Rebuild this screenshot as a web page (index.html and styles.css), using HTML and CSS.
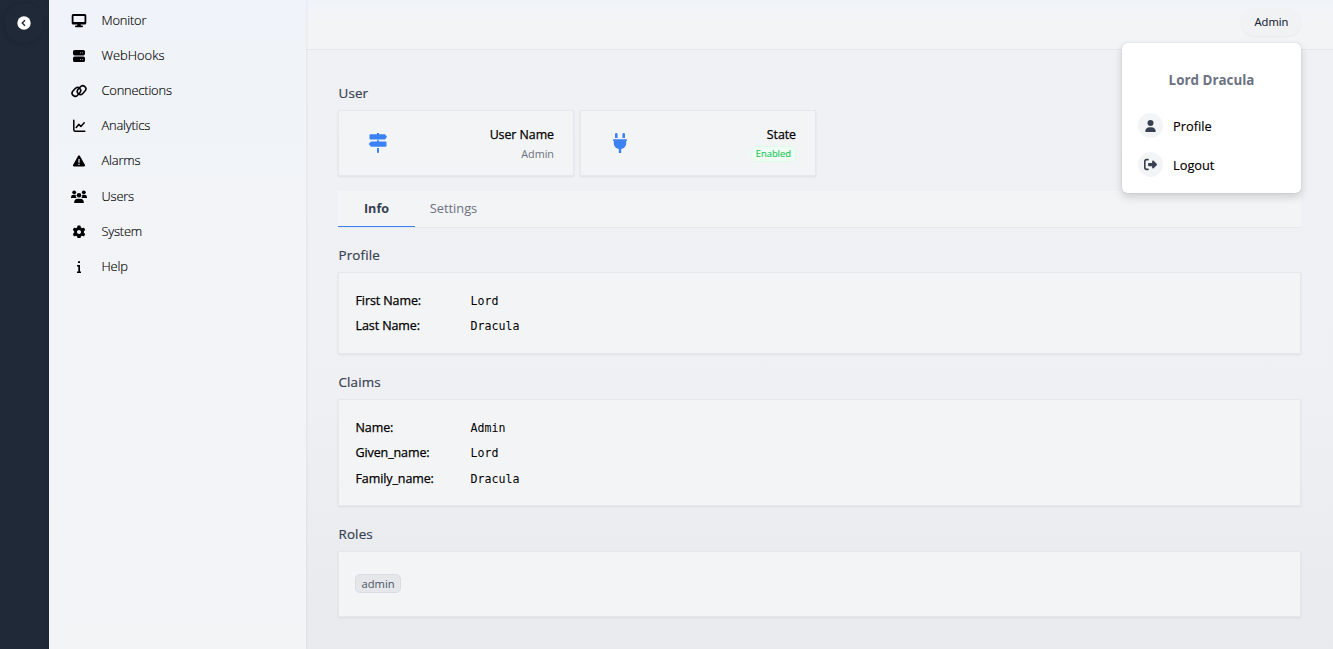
FILE: index.html
```html
<!DOCTYPE html>
<html lang="en">
<head>
<meta charset="utf-8">
<title>User</title>
<link rel="stylesheet" href="styles.css">
</head>
<body>
<div class="app">
  <aside class="rail">
    <button class="collapse" aria-label="Collapse menu">
      <svg width="14" height="14" viewBox="0 0 14 14"><circle cx="7" cy="7" r="6.700" fill="#fff"/><path d="M8 4.200 5.200 7 8 9.800" fill="none" stroke="#1f2937" stroke-width="1.400"/></svg>
    </button>
  </aside>
  <nav class="menu">
    <a class="item"><svg class="icon" viewBox="0 0 16 16"><path fill-rule="evenodd" d="M2.200 1.100h11.600a1.500 1.500 0 0 1 1.500 1.500v7.300a1.500 1.500 0 0 1-1.500 1.500H9.600l.3 1.200h1.300q.8 0 .8.8t-.8.8H4.800q-.8 0-.8-.8t.8-.8h1.300l.3-1.200H2.200a1.500 1.500 0 0 1-1.500-1.500V2.600a1.500 1.500 0 0 1 1.500-1.500zM2.500 2.900v6.200h11V2.900z"/></svg><span>Monitor</span></a>
    <a class="item wide"><svg class="icon" viewBox="0 0 16 16"><path fill-rule="evenodd" d="M3.600 2h8.800A1.600 1.600 0 0 1 14 3.600v2.200a1.600 1.600 0 0 1-1.600 1.600H3.600A1.600 1.600 0 0 1 2 5.800V3.600A1.600 1.600 0 0 1 3.600 2zM9 4.400v.8h.8v-.8zm2.300 0v.8h.8v-.8zM3.600 8.600h8.800a1.600 1.600 0 0 1 1.600 1.600v2.200a1.600 1.600 0 0 1-1.600 1.600H3.600A1.600 1.600 0 0 1 2 12.400v-2.200a1.600 1.600 0 0 1 1.600-1.600zM9 11v.8h.8V11zm2.300 0v.8h.8V11z"/></svg><span>WebHooks</span></a>
    <a class="item"><svg class="icon" viewBox="0 0 16 16"><g fill="none" stroke="#000" stroke-width="1.600"><rect x="0.600" y="5.800" width="9.600" height="6.200" rx="3.100" transform="rotate(-48 5.400 8.900)"/><rect x="5.800" y="4" width="9.600" height="6.200" rx="3.100" transform="rotate(-48 10.600 7.100)"/></g></svg><span>Connections</span></a>
    <a class="item"><svg class="icon" viewBox="0 0 16 16"><path d="M2.800 2.300v9.400q0 1.500 1.500 1.500h9.500M5.200 9.400l2.500-3 2.200 2 3.300-3.600" fill="none" stroke="#000" stroke-width="1.500" stroke-linecap="round" stroke-linejoin="round"/></svg><span>Analytics</span></a>
    <a class="item"><svg class="icon" viewBox="0 0 16 16"><path fill-rule="evenodd" d="M7.200 2.800q.8-1 1.600 0l5.200 9.300q.4 1.400-.9 1.400H2.900q-1.300 0-.9-1.400zM7.400 6.100v3.600h1.200V6.100zm0 4.600v1.200h1.200v-1.200z"/></svg><span>Alarms</span></a>
    <a class="item"><svg class="icon" viewBox="0 0 16 16"><circle cx="3.200" cy="3.300" r="1.900"/><circle cx="12.800" cy="3.300" r="1.900"/><circle cx="8" cy="6.300" r="2.300"/><path d="M0 9V8.200A2.500 2.500 0 0 1 2.500 5.800h2.300A3.600 3.600 0 0 0 5.600 9zM16 9V8.200a2.500 2.500 0 0 0-2.500-2.400h-2.300A3.600 3.600 0 0 1 10.400 9zM3.200 14v-.6a3.700 3.700 0 0 1 3.600-3.700h2.400a3.700 3.700 0 0 1 3.600 3.700v.6z"/></svg><span>Users</span></a>
    <a class="item"><svg class="icon gear" viewBox="0 0 512 512"><path d="M495.900 166.600c3.200 8.700 .5 18.400-6.400 24.600l-43.300 39.400c1.100 8.300 1.700 16.800 1.700 25.400s-.6 17.100-1.700 25.400l43.300 39.400c6.900 6.200 9.600 15.900 6.400 24.600c-4.400 11.900-9.700 23.300-15.800 34.300l-4.700 8.100c-6.600 11-14 21.400-22.100 31.200c-5.900 7.200-15.700 9.600-24.500 6.800l-55.700-17.700c-13.400 10.300-28.200 18.900-44 25.400l-12.500 57.100c-2 9.100-9 16.300-18.200 17.800c-13.800 2.300-28 3.500-42.500 3.500s-28.700-1.200-42.500-3.500c-9.200-1.500-16.200-8.700-18.200-17.800l-12.500-57.100c-15.800-6.500-30.600-15.100-44-25.400L83.100 425.900c-8.800 2.800-18.600 .3-24.500-6.800c-8.100-9.800-15.500-20.200-22.100-31.200l-4.700-8.100c-6.100-11-11.400-22.400-15.800-34.300c-3.200-8.700-.5-18.400 6.400-24.600l43.300-39.400C64.600 273.100 64 264.600 64 256s.6-17.100 1.700-25.400L22.400 191.200c-6.900-6.200-9.600-15.900-6.400-24.600c4.400-11.900 9.700-23.300 15.800-34.300l4.700-8.100c6.600-11 14-21.400 22.100-31.200c5.900-7.200 15.700-9.600 24.500-6.800l55.700 17.700c13.400-10.300 28.200-18.900 44-25.400l12.500-57.100c2-9.100 9-16.300 18.200-17.800C227.300 1.200 241.500 0 256 0s28.700 1.200 42.500 3.500c9.200 1.500 16.200 8.700 18.200 17.800l12.500 57.100c15.800 6.500 30.600 15.100 44 25.400l55.700-17.700c8.800-2.800 18.600-.3 24.500 6.800c8.100 9.800 15.500 20.200 22.100 31.200l4.700 8.100c6.100 11 11.400 22.400 15.800 34.300zM256 336a80 80 0 1 0 0-160 80 80 0 1 0 0 160z"/></svg><span>System</span></a>
    <a class="item"><svg class="icon" viewBox="0 0 16 16"><path d="M7 2.200h2V4H7zM6 6h3v6.400h1V14H6v-1.600h1.300V7.500H6z"/></svg><span>Help</span></a>
  </nav>
  <div class="page">
    <header class="topbar">
      <button class="account">Admin</button>
      <div class="dropdown">
        <div class="fullname">Lord Dracula</div>
        <a class="entry"><span class="bubble"><svg width="11" height="12" viewBox="0 0 448 512"><path d="M224 256A128 128 0 1 0 224 0a128 128 0 1 0 0 256zm-45.700 48C79.800 304 0 383.800 0 482.300C0 498.700 13.300 512 29.700 512H418.300c16.400 0 29.700-13.300 29.700-29.700C448 383.800 368.200 304 269.700 304H178.300z"/></svg></span><span>Profile</span></a>
        <a class="entry"><span class="bubble"><svg width="13" height="13" viewBox="0 0 512 512"><path d="M377.900 105.900L500.700 228.700c7.200 7.200 11.300 17.100 11.300 27.300s-4.100 20.100-11.300 27.300L377.900 406.100c-6.400 6.400-15 9.900-24 9.900c-18.700 0-33.900-15.200-33.900-33.900l0-62.100-128 0c-17.700 0-32-14.300-32-32l0-64c0-17.700 14.300-32 32-32l128 0 0-62.100c0-18.700 15.200-33.900 33.900-33.900c9 0 17.600 3.600 24 9.900zM160 96L96 96c-17.700 0-32 14.300-32 32l0 256c0 17.700 14.300 32 32 32l64 0c17.700 0 32 14.300 32 32s-14.300 32-32 32l-64 0c-53 0-96-43-96-96L0 128C0 75 43 32 96 32l64 0c17.700 0 32 14.300 32 32s-14.300 32-32 32z"/></svg></span><span>Logout</span></a>
      </div>
    </header>
    <main class="content">
      <h2 class="heading">User</h2>
      <div class="cards">
        <section class="panel card">
          <svg class="card-icon" viewBox="0 0 20 20"><path d="M9 0h2v1.200H9zM2.500 1.200h14.500l2 2.600-2 2.600H2.500q-1 0-1-1V2.200q0-1 1-1zM9 7.300h2v1.200H9zM3 8.500h14.500q1 0 1 1v3.200q0 1-1 1H3L.7 11.100zM9 15h2v4.200q0 .8-1 .8t-1-.8z"/></svg>
          <div class="facts"><div class="label">User Name</div><div class="value">Admin</div></div>
        </section>
        <section class="panel card">
          <svg class="card-icon plug" viewBox="0 0 20 20"><path d="M5 1.200q0-1.200 1.300-1.200t1.300 1.200V5H5zM12.400 1.200q0-1.200 1.300-1.200T15 1.200V5h-2.600zM3.800 6.200h12.400q.8 0 .8.900t-.8.900v2.300q0 4.600-5 5.800V20H8.800v-3.900q-5-1.200-5-5.800V8q-.8 0-.8-.9t.8-.9z"/></svg>
          <div class="facts"><div class="label">State</div><span class="badge">Enabled</span></div>
        </section>
      </div>
      <div class="tabs"><a class="tab active">Info</a><a class="tab">Settings</a></div>
      <h2 class="heading">Profile</h2>
      <dl class="panel details">
        <dt>First Name:</dt><dd>Lord</dd>
        <dt>Last Name:</dt><dd>Dracula</dd>
      </dl>
      <h2 class="heading">Claims</h2>
      <dl class="panel details">
        <dt>Name:</dt><dd>Admin</dd>
        <dt>Given_name:</dt><dd>Lord</dd>
        <dt>Family_name:</dt><dd>Dracula</dd>
      </dl>
      <h2 class="heading">Roles</h2>
      <div class="panel roles"><span class="role">admin</span></div>
    </main>
  </div>
</div>
</body>
</html>
```
FILE: styles.css
```css
* { box-sizing: border-box; }
body { margin: 0; font: 12.8px/20px "Open Sans", "Noto Sans", sans-serif; color: #000; }
button { font: inherit; border: 0; padding: 0; }
.app { display: flex; height: 649px; overflow: hidden; background: linear-gradient(#f0f1f5, #eff0f3 60%, #ebecf0 85%, #e9eaee); }
.rail { width: 49px; flex: none; background: #1f2937; padding: 3px 0 0 4px; }
.collapse { display: flex; align-items: center; justify-content: center; width: 40px; height: 40px; border-radius: 50%; background: #1f2937; box-shadow: -1px 1px 5px rgba(0,0,0,.1); }
.menu { width: 257px; flex: none; padding: 3px 0 0 22px; background: linear-gradient(#f0f4fa, #f0f4f8 22%, #f3f4f8 34%, #f3f4f6); box-shadow: 0 0 3px rgba(0,0,0,.1); position: relative; z-index: 1; }
.item { display: flex; align-items: center; gap: 14px; height: 35.2px; font-size: 12.9px; font-weight: 300; letter-spacing: -.2px; }
.item span { margin-top: -1.8px; padding-left: .5px; -webkit-text-stroke: .15px; }
.wide { letter-spacing: 0; }
.icon { width: 16px; height: 16px; flex: none; }
.gear { padding: 1.5px; }
.page { flex: 1; display: flex; flex-direction: column; min-width: 0; }
.topbar { position: relative; height: 50px; flex: none; display: flex; justify-content: flex-end; align-items: flex-start; padding: 8px 32px 0 0; background: linear-gradient(#f0f4fa, #f3f4f6 45%); border-bottom: 1px solid #e5e7eb; }
.account { width: 60px; height: 28px; padding-left: 1px; border-radius: 14px; background: #f0f2f4; box-shadow: 0 1px 2px rgba(0,0,0,.05); font-size: 11.2px; color: #1f2937; -webkit-text-stroke: .15px; }
.dropdown { position: absolute; top: 43px; right: 32px; width: 179px; height: 150px; padding: 27px 16px 0; border-radius: 5px; background: #fff; box-shadow: 0 0 1px rgba(0,0,0,.3), 0 4px 9px rgba(0,0,0,.16); }
.fullname { text-align: center; font-weight: 700; font-size: 13.4px; color: #6b7280; margin-bottom: 16px; }
.entry { display: flex; align-items: center; gap: 10px; height: 39px; font-size: 12.8px; -webkit-text-stroke: .15px; }
.bubble { width: 25px; height: 25px; border-radius: 50%; background: #f3f4f6; display: flex; align-items: center; justify-content: center; fill: #374151; }
.bubble svg { margin-right: 1px; }
.content { padding: 33px 32px 0 32px; }
.heading { margin: 0 0 7px; padding-left: .5px; font-size: 13.4px; line-height: 20px; font-weight: 400; letter-spacing: .15px; color: #374151; -webkit-text-stroke: .2px; }
.panel { margin: 0 0 18px; background: #f3f4f6; border: 1px solid #e5e7eb; box-shadow: 0 1px 2px rgba(0,0,0,.07); }
.cards { display: flex; gap: 6px; }
.card { width: 236px; height: 66px; display: flex; justify-content: space-between; padding: 14px 19px 0 28.5px; margin-bottom: 15px; }
.card-icon { width: 20px; height: 20px; margin-top: 8px; fill: #3b82f6; }
.plug { margin-left: .5px; }
.facts { display: flex; flex-direction: column; align-items: flex-end; }
.label { font-size: 12.4px; line-height: 19px; letter-spacing: -.05px; -webkit-text-stroke: .25px; }
.value { font-size: 10.8px; color: #6b7280; }
.badge { margin-top: 2px; padding: 0 4px; border: 1px solid #dcfce7; border-radius: 6px; background: #f0fdf4; color: #22c55e; font-size: 9.4px; line-height: 14px; -webkit-text-stroke: .15px; }
.tabs { display: flex; height: 37px; border-bottom: 1px solid #e5e7eb; background: #f3f4f6; margin-bottom: 17px; }
.tab { width: 77px; height: 36px; text-align: center; line-height: 34px; color: #6b7280; }
.active { color: #374151; font-weight: 700; font-size: 12.6px; line-height: 35px; border-bottom: 1px solid #3b82f6; }
.details { display: grid; grid-template-columns: 115px 1fr; grid-auto-rows: 25.4px; align-items: center; padding: 15.2px 16px 14px; }
.details dt { padding-left: .5px; font-size: 12.5px; letter-spacing: -.1px; -webkit-text-stroke: .25px; }
.details dd { margin: 0; padding-left: .5px; font: 11.6px/20px "DejaVu Sans Mono", monospace; }
.roles { height: 66px; padding: 22px 16px; display: flex; }
.role { height: 19px; padding: 0 5.500px; border: 1px solid #d9dce2; border-radius: 5px; background: #e5e7eb; color: #4b5563; font-size: 11.2px; line-height: 18px; }
```
